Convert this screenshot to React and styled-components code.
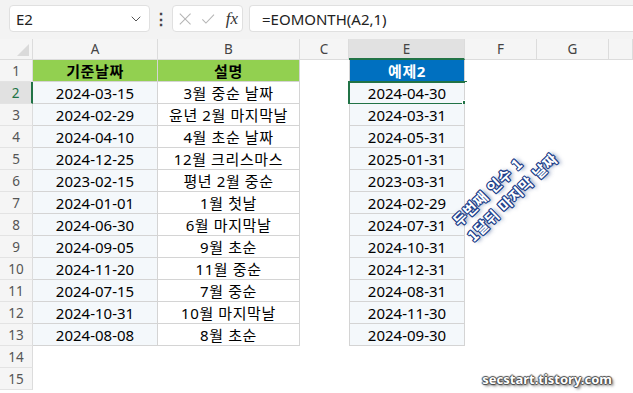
import React from "react";
import styled, { createGlobalStyle } from "styled-components";
import { ChevronDown } from "lucide-react";

const GlobalStyle = createGlobalStyle`
  html, body {
    margin: 0;
    padding: 0;
    background: #ffffff;
  }
  body {
    font-family: "Noto Sans", "Noto Sans CJK KR", sans-serif;
    overflow: hidden;
  }
`;

const Page = styled.div`
  width: 633px;
  height: 393px;
  position: relative;
  overflow: hidden;
  background: #ffffff;
`;

const Toolbar = styled.div`
  height: 39px;
  box-sizing: border-box;
  padding: 5px 0 7px 9px;
  display: flex;
  align-items: stretch;
  background: #f3f3f3;
`;

const NameBox = styled.div`
  width: 141px;
  box-sizing: border-box;
  background: #fff;
  border: 1px solid #e0e0e0;
  border-radius: 4px;
  display: flex;
  align-items: center;
  justify-content: space-between;
  padding: 0 5px 0 6px;
  font-size: 15px;
  color: #222;
`;

const Dots = styled.div`
  width: 22px;
  display: flex;
  align-items: center;
  justify-content: center;
  font-size: 16px;
  font-weight: bold;
  color: #444;
`;

const FxBox = styled.div`
  width: 71px;
  box-sizing: border-box;
  background: #fff;
  border: 1px solid #e0e0e0;
  border-radius: 4px;
  display: flex;
  align-items: center;
  gap: 9px;
  padding: 0 4px 0 5px;
`;

const FxLabel = styled.span`
  font-family: "Liberation Serif", "DejaVu Serif", serif;
  font-style: italic;
  font-size: 17px;
  color: #333;
  margin-left: 1px;
`;

const FormulaBox = styled.div`
  flex: 1;
  margin-left: 6px;
  box-sizing: border-box;
  background: #fff;
  border: 1px solid #e0e0e0;
  border-right: none;
  border-radius: 4px 0 0 4px;
  display: flex;
  align-items: center;
  padding-left: 12px;
  font-size: 15px;
  color: #222;
`;

const Sheet = styled.div`
  display: grid;
  grid-template-columns: 33px 125px 142px 49px 116px 72px 72px 1fr;
  grid-template-rows: 21px repeat(15, 22px);
`;

const Corner = styled.div`
  background: #f5f5f5;
  border-right: 1px solid #dcdcdc;
  border-bottom: 1px solid #dcdcdc;
  box-sizing: border-box;
  position: relative;
  &::after {
    content: "";
    position: absolute;
    right: 3px;
    bottom: 3px;
    width: 0;
    height: 0;
    border-left: 12px solid transparent;
    border-bottom: 12px solid #dadada;
  }
`;

const ColHead = styled.div`
  box-sizing: border-box;
  background: ${(p) => (p.$active ? "#e1e1e1" : "#f5f5f5")};
  border-right: 1px solid #dcdcdc;
  border-bottom: ${(p) => (p.$active ? "2px solid #217346" : "1px solid #dcdcdc")};
  display: flex;
  align-items: center;
  justify-content: center;
  font-size: 13.5px;
  color: #444;
`;

const RowHead = styled.div`
  box-sizing: border-box;
  background: ${(p) => (p.$active ? "#e1e1e1" : "#f5f5f5")};
  border-right: ${(p) => (p.$active ? "2px solid #217346" : "1px solid #dcdcdc")};
  border-bottom: 1px solid #e3e3e3;
  display: flex;
  align-items: center;
  justify-content: center;
  font-size: 13.5px;
  color: ${(p) => (p.$active ? "#217346" : "#555")};
`;

const Cell = styled.div`
  box-sizing: border-box;
  position: relative;
  background: ${(p) => p.$fill || "#ffffff"};
  color: ${(p) => p.$color || "#000"};
  font-weight: ${(p) => (p.$bold ? 700 : 400)};
  letter-spacing: ${(p) => (p.$spaced ? "0.6px" : "0")};
  border-right: ${(p) => (p.$lined ? "1px solid #d4d4d4" : "none")};
  border-bottom: ${(p) => (p.$lined ? "1px solid #d4d4d4" : "none")};
  border-left: ${(p) => (p.$leftLine ? "1px solid #d4d4d4" : "none")};
  display: flex;
  align-items: center;
  justify-content: center;
  font-size: 15px;
  white-space: nowrap;
`;

const Selection = styled.div`
  position: absolute;
  left: -2px;
  top: -1px;
  width: 119px;
  height: 24px;
  box-sizing: border-box;
  border: 2px solid #217346;
  &::after {
    content: "";
    position: absolute;
    right: -4px;
    bottom: -4px;
    width: 5px;
    height: 5px;
    background: #217346;
    border: 1px solid #fff;
  }
`;

const Note = styled.div`
  position: absolute;
  left: 455px;
  top: 212px;
  transform-origin: 0 11px;
  transform: rotate(-44deg);
  font-family: "Noto Sans CJK KR", sans-serif;
  font-weight: 700;
  font-size: 14.5px;
  letter-spacing: 0.8px;
  word-spacing: 1px;
  line-height: 21px;
  color: #ffffff;
  white-space: nowrap;
  text-shadow: 1px 0 0 #1e3f8a, -1px 0 0 #1e3f8a, 0 1px 0 #1e3f8a, 0 -1px 0 #1e3f8a,
    1px 1px 0 #1e3f8a, -1px -1px 0 #1e3f8a, 1px -1px 0 #1e3f8a, -1px 1px 0 #1e3f8a,
    2px 2px 4px rgba(20, 50, 120, 0.7);
`;

const Watermark = styled.div`
  position: absolute;
  right: 21px;
  top: 370px;
  font-family: "Noto Sans", "DejaVu Sans", sans-serif;
  font-weight: 700;
  font-size: 13px;
  color: #ffffff;
  text-shadow: 1px 0 1px #444, -1px 0 1px #444, 0 1px 1px #444, 0 -1px 1px #444,
    2px 2px 3px rgba(0, 0, 0, 0.6);
`;

const dates = [
  "2024-03-15", "2024-02-29", "2024-04-10", "2024-12-25", "2023-02-15", "2024-01-01",
  "2024-06-30", "2024-09-05", "2024-11-20", "2024-07-15", "2024-10-31", "2024-08-08",
];

const notes = [
  "3월 중순 날짜", "윤년 2월 마지막날", "4월 초순 날짜", "12월 크리스마스", "평년 2월 중순", "1월 첫날",
  "6월 마지막날", "9월 초순", "11월 중순", "7월 중순", "10월 마지막날", "8월 초순",
];

const results = [
  "2024-04-30", "2024-03-31", "2024-05-31", "2025-01-31", "2023-03-31", "2024-02-29",
  "2024-07-31", "2024-10-31", "2024-12-31", "2024-08-31", "2024-11-30", "2024-09-30",
];

const TINT = "#f4f8fb";

function XIcon() {
  return (
    <svg width="16" height="16" viewBox="0 0 16 16">
      <path d="M2 2 L14 14 M14 2 L2 14" stroke="#b5b5b5" strokeWidth="1.2" fill="none" />
    </svg>
  );
}

function CheckIcon() {
  return (
    <svg width="16" height="16" viewBox="0 0 16 16">
      <path d="M1.5 8.5 L5.5 12.5 L14.5 3" stroke="#b5b5b5" strokeWidth="1.2" fill="none" />
    </svg>
  );
}

function App() {
  const rows = [];
  for (let r = 1; r <= 15; r++) {
    const i = r - 2;
    let a = null;
    let b = null;
    let e = null;
    if (r === 1) {
      a = <Cell $lined $bold $spaced $fill="#92d050">기준날짜</Cell>;
      b = <Cell $lined $bold $spaced $fill="#92d050">설명</Cell>;
      e = <Cell $lined $leftLine $bold $spaced $fill="#0070c0" $color="#fff">예제2</Cell>;
    } else if (r <= 13) {
      a = <Cell $lined $fill={TINT}>{dates[i]}</Cell>;
      b = <Cell $lined $spaced>{notes[i]}</Cell>;
      e = (
        <Cell $lined $leftLine $fill={TINT}>
          {results[i]}
          {r === 2 && <Selection />}
        </Cell>
      );
    } else {
      a = <Cell />;
      b = <Cell />;
      e = <Cell />;
    }
    rows.push(
      <React.Fragment key={r}>
        <RowHead $active={r === 2}>{r}</RowHead>
        {a}
        {b}
        <Cell />
        {e}
        <Cell />
        <Cell />
        <Cell />
      </React.Fragment>
    );
  }

  return (
    <Page>
      <GlobalStyle />
      <Toolbar>
        <NameBox>
          <span>E2</span>
          <ChevronDown size={16} color="#555" strokeWidth={1.5} />
        </NameBox>
        <Dots>⋮</Dots>
        <FxBox>
          <XIcon />
          <CheckIcon />
          <FxLabel>fx</FxLabel>
        </FxBox>
        <FormulaBox>=EOMONTH(A2,1)</FormulaBox>
      </Toolbar>
      <Sheet>
        <Corner />
        <ColHead>A</ColHead>
        <ColHead>B</ColHead>
        <ColHead>C</ColHead>
        <ColHead $active>E</ColHead>
        <ColHead>F</ColHead>
        <ColHead>G</ColHead>
        <ColHead />
        {rows}
      </Sheet>
      <Note>
        두번째 인수 1
        <br />
        1달뒤 마지막 날짜
      </Note>
      <Watermark>secstart.tistory.com</Watermark>
    </Page>
  );
}

export default App;
